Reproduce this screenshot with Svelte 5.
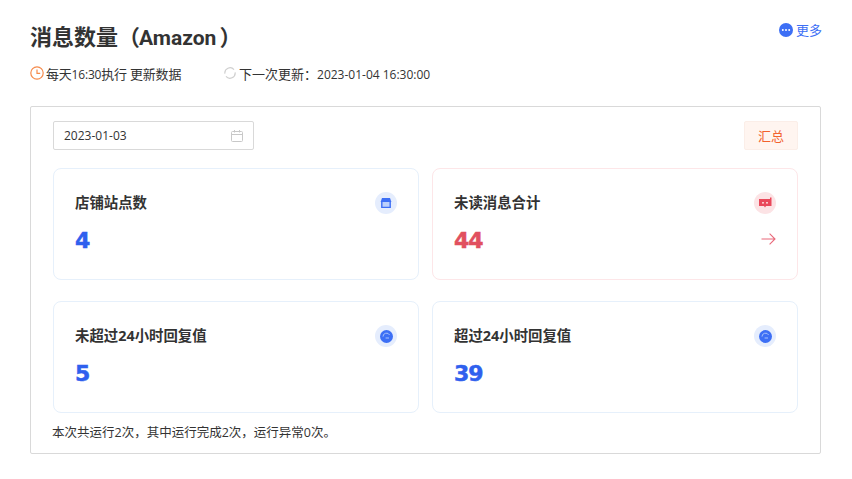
<script>
  const cards = [
    { title: '店铺站点数', value: '4', icon: 'store' },
    { title: '未读消息合计', value: '44', icon: 'message', alert: true },
    { title: '未超过24小时回复值', value: '5', icon: 'reply' },
    { title: '超过24小时回复值', value: '39', icon: 'reply' }
  ];
</script>

<div class="page">
  <header class="head">
    <h1>消息数量（<span class="brand">Amazon</span>）</h1>
    <a class="more">
      <svg width="14" height="14" viewBox="0 0 14 14">
        <circle cx="7" cy="7" r="7" fill="#3d6ff5" />
        <circle cx="3.8" cy="7" r="1" fill="#fff" />
        <circle cx="7" cy="7" r="1" fill="#fff" />
        <circle cx="10.2" cy="7" r="1" fill="#fff" />
      </svg>
      更多
    </a>
  </header>

  <div class="meta">
    <span class="meta-item first">
      <svg width="14" height="14" viewBox="0 0 14 14" fill="none" stroke="#f58b4c" stroke-width="1.2">
        <circle cx="7" cy="7" r="6.2" />
        <path d="M7 3.4V7.4H10.2" />
      </svg>
      <span class="tight">每天<span class="lat">16:30</span>执行 更新数据</span>
    </span>
    <span class="meta-item">
      <svg width="12" height="12" viewBox="0 0 12 12" fill="none" stroke="#cfcfcf" stroke-width="1.2">
        <path d="M0.9 6.6A5.2 5.2 0 0 1 10 2.6" />
        <path d="M11.1 5.4A5.2 5.2 0 0 1 2 9.4" />
      </svg>
      <span>下一次更新：<span class="lat">2023-01-04 16:30:00</span></span>
    </span>
  </div>

  <section class="panel">
    <div class="toolbar">
      <div class="date">
        <span>2023-01-03</span>
        <svg width="12" height="12" viewBox="0 0 12 12" fill="none" stroke="#c8c8c8" stroke-width="1">
          <rect x="0.5" y="1.5" width="11" height="10" rx="1" />
          <path d="M0.5 4.5H11.5M3.5 0V2.5M8.5 0V2.5" />
        </svg>
      </div>
      <button class="summary">汇总</button>
    </div>

    <div class="grid">
      {#each cards as card}
        <div class="card" class:alert={card.alert}>
          <div class="card-top">
            <span class="card-title">{card.title}</span>
            <span class="badge">
              {#if card.icon === 'store'}
                <svg width="12" height="12" viewBox="0 0 12 12">
                  <path d="M2 1H10L11.4 5H0.6Z" fill="#3d6ff5" />
                  <path d="M1.8 5V10.4H10.2V5" fill="#bcd0fb" stroke="#3d6ff5" stroke-width="1.4" />
                </svg>
              {:else if card.icon === 'message'}
                <svg width="14" height="12" viewBox="0 0 14 12">
                  <path d="M1 2H12V0.6H13.5V9H8L7 10.5L6 9H1Z" fill="#e9495b" />
                  <rect x="4" y="5" width="2" height="1.6" fill="#f9c8cc" />
                  <rect x="8" y="5" width="2" height="1.6" fill="#f9c8cc" />
                </svg>
              {:else}
                <svg width="13" height="13" viewBox="0 0 13 13">
                  <circle cx="6.5" cy="6.5" r="6.5" fill="#3d6ff5" />
                  <path d="M3 6.6A3.5 3.5 0 0 1 9.6 5" fill="none" stroke="#a9c2fa" stroke-width="1" />
                  <path d="M5.6 8H9" stroke="#a9c2fa" stroke-width="1" />
                </svg>
              {/if}
            </span>
          </div>
          <div class="card-bottom">
            <span class="value">{card.value}</span>
            {#if card.alert}
              <svg class="arrow" width="15" height="12" viewBox="0 0 15 12" fill="none" stroke="#e9697a" stroke-width="1.1">
                <path d="M0.5 6H14M8.6 0.6L14 6L8.6 11.4" />
              </svg>
            {/if}
          </div>
        </div>
      {/each}
    </div>

    <p class="note">本次共运行2次，其中运行完成2次，运行异常0次。</p>
  </section>
</div>

<style>
  :global(body) {
    margin: 0;
    background: #fff;
  }

  .page {
    width: 852px;
    height: 479px;
    box-sizing: border-box;
    padding: 21px 30px 0;
    font-family: 'Open Sans', 'Noto Sans CJK SC', sans-serif;
    color: #333;
  }

  .head {
    display: flex;
    justify-content: space-between;
    align-items: flex-start;
    height: 30px;
  }

  h1 {
    margin: 0;
    font-size: 22px;
    line-height: 30px;
    font-weight: 700;
    color: #333;
  }

  .brand {
    font-family: Roboto, sans-serif;
    font-size: 21px;
    line-height: 1;
    margin: 0 3px 0 -1px;
  }

  .more {
    display: flex;
    align-items: center;
    gap: 3px;
    font-size: 13px;
    line-height: 16px;
    color: #3d6ff5;
    margin-top: 1px;
  }

  .meta {
    display: flex;
    margin-top: 12px;
    height: 20px;
    align-items: center;
    font-size: 13px;
    color: #333;
  }

  .meta .lat {
    font-size: 12px;
  }

  .meta-item {
    display: flex;
    align-items: center;
    gap: 3px;
  }

  .meta-item.first {
    width: 194px;
    gap: 2px;
  }

  .tight {
    letter-spacing: -0.2px;
  }

  .panel {
    margin-top: 23px;
    width: 791px;
    height: 348px;
    box-sizing: border-box;
    border: 1px solid #d9d9d9;
    border-radius: 2px;
    padding: 14px 22px 0;
  }

  .toolbar {
    display: flex;
    justify-content: space-between;
    height: 29px;
  }

  .date {
    width: 201px;
    box-sizing: border-box;
    border: 1px solid #d9d9d9;
    border-radius: 2px;
    padding: 0 10px;
    display: flex;
    align-items: center;
    justify-content: space-between;
    font-size: 12px;
  }

  .summary {
    width: 54px;
    border: 1px solid #fbeee8;
    border-radius: 2px;
    background: #fff5f0;
    color: #f2622e;
    font-family: inherit;
    font-size: 13px;
    padding: 0;
  }

  .grid {
    display: grid;
    grid-template-columns: 366px 366px;
    grid-auto-rows: 112px;
    column-gap: 13px;
    row-gap: 21px;
    margin-top: 18px;
  }

  .card {
    box-sizing: border-box;
    border: 1px solid #e6f0fb;
    border-radius: 8px;
    padding: 23px 21px 0;
  }

  .card.alert {
    border-color: #fde6e8;
  }

  .card-top {
    display: flex;
    justify-content: space-between;
    align-items: center;
    height: 22px;
  }

  .card-title {
    font-size: 14.4px;
    line-height: 20px;
    font-weight: 700;
    color: #333;
  }

  .badge {
    width: 22px;
    height: 22px;
    border-radius: 50%;
    background: #e5edfd;
    display: flex;
    align-items: center;
    justify-content: center;
  }

  .alert .badge {
    background: #fce3e5;
  }

  .card-bottom {
    display: flex;
    justify-content: space-between;
    align-items: center;
    margin-top: 12px;
    height: 28px;
  }

  .arrow {
    margin-bottom: 2px;
  }

  .value {
    font-family: 'DejaVu Sans', sans-serif;
    font-size: 22px;
    font-weight: 700;
    letter-spacing: -1px;
    -webkit-text-stroke: 0.5px currentColor;
    color: #2f60ee;
  }

  .alert .value {
    color: #e1505f;
  }

  .note {
    margin: 12px 0 0 -1px;
    font-size: 12.5px;
    line-height: 16px;
    color: #333;
  }
</style>
